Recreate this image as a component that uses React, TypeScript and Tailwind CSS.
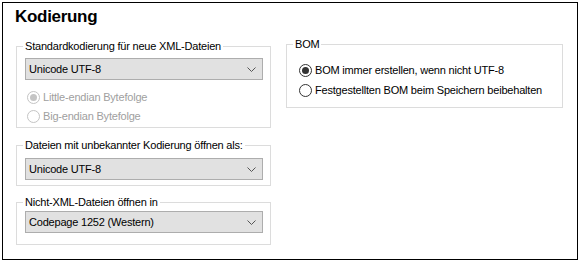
import { ReactNode } from 'react';

const FONT = "font-['Liberation_Sans',Arial,sans-serif]";

function GroupBox({ label, children, className = '' }: { label: string; children: ReactNode; className?: string }) {
  return (
    <fieldset className={`border border-[#dcdcdc] pl-[8px] pr-[7px] ${className}`}>
      <legend className="-ml-[2px] px-[2px] text-[11px] leading-[13px] tracking-[-0.2px]">{label}</legend>
      {children}
    </fieldset>
  );
}

function Select({ value }: { value: string }) {
  return (
    <div className="flex h-[22px] w-[238px] items-center justify-between border border-[#adadad] bg-[#e1e1e1] pl-[3px] pr-[6px] text-[11px] tracking-[-0.2px]">
      <span>{value}</span>
      <svg width="9" height="5" viewBox="0 0 9 5" className="text-[#555]">
        <path d="M0.5 0.5 L4.5 4.5 L8.5 0.5" fill="none" stroke="currentColor" strokeWidth="1" />
      </svg>
    </div>
  );
}

function Radio({ label, checked, disabled, tall }: { label: string; checked?: boolean; disabled?: boolean; tall?: boolean }) {
  return (
    <label
      className={`flex items-center gap-[3px] text-[11px] tracking-[-0.2px] ${tall ? 'h-[20px]' : 'h-[19px]'} ${
        disabled ? 'text-[#a0a0a0]' : 'text-black'
      }`}
    >
      <span
        className={`flex h-[13px] w-[13px] items-center justify-center rounded-full border ${
          disabled ? 'border-[#c4c4c4] bg-white' : 'border-[#333] bg-white'
        }`}
      >
        {checked && <span className={`h-[7px] w-[7px] rounded-full ${disabled ? 'bg-[#c4c4c4]' : 'bg-[#333]'}`} />}
      </span>
      {label}
    </label>
  );
}

export default function App() {
  return (
    <div className={`bg-white pl-[2px] pt-[2px] ${FONT}`}>
      <div className="h-[258px] w-[576px] border border-black pl-[13px] text-black">
        <h1 className="-ml-[1px] mt-[4px] text-[17px] font-bold leading-[20px] tracking-[-0.3px]">Kodierung</h1>

        <div className="flex gap-[15px]">
          {/* Left column */}
          <div className="flex w-[255px] flex-col">
            <GroupBox label="Standardkodierung für neue XML-Dateien" className="mt-[13px] pb-[1px]">
              <div className="mt-[5px]">
                <Select value="Unicode UTF-8" />
              </div>
              <div className="ml-[2px] mt-[8px]">
                <Radio label="Little-endian Bytefolge" checked disabled />
                <Radio label="Big-endian Bytefolge" disabled />
              </div>
            </GroupBox>

            <GroupBox label="Dateien mit unbekannter Kodierung öffnen als:" className="mt-[11px] pb-[5px]">
              <div className="mt-[6px]">
                <Select value="Unicode UTF-8" />
              </div>
            </GroupBox>

            <GroupBox label="Nicht-XML-Dateien öffnen in" className="mt-[10px] pb-[11px]">
              <div className="mt-[2px]">
                <Select value="Codepage 1252 (Western)" />
              </div>
            </GroupBox>
          </div>

          {/* Right column */}
          <div className="w-[277px]">
            <GroupBox label="BOM" className="mt-[11px] pb-[7px]">
              <div className="ml-[4px] mt-[9px]">
                <Radio label="BOM immer erstellen, wenn nicht UTF-8" checked tall />
                <Radio label="Festgestellten BOM beim Speichern beibehalten" tall />
              </div>
            </GroupBox>
          </div>
        </div>
      </div>
    </div>
  );
}
